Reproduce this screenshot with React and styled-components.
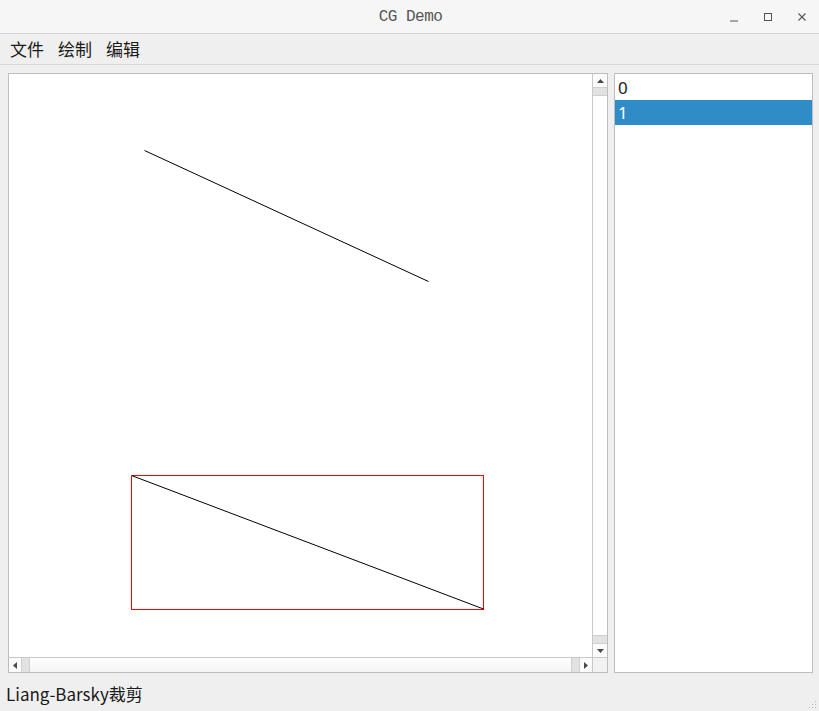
import React from "react";
import styled, { createGlobalStyle } from "styled-components";

const Global = createGlobalStyle`
  html, body { margin: 0; padding: 0; }
  body { width: 819px; height: 711px; overflow: hidden; background: #efefef;
    font-family: "Noto Sans CJK SC", "Noto Sans", sans-serif; }
`;

const Window = styled.div`
  width: 819px; height: 711px; display: flex; flex-direction: column; background: #efefef;
`;

const TitleBar = styled.div`
  height: 33px; flex: none; display: flex; align-items: center; justify-content: center;
  background: #f6f6f6; border-bottom: 1px solid #d4d4d4; position: relative;
`;

const Title = styled.div`
  font-family: "Liberation Mono", "DejaVu Sans Mono", monospace; font-size: 16px; color: #555;
  letter-spacing: -0.5px; padding-left: 2px;
`;

const Controls = styled.div`
  position: absolute; right: 0; top: 0; height: 33px; display: flex; align-items: center;
`;

const Ctrl = styled.div`
  width: 34px; height: 33px; display: flex; align-items: center; justify-content: center;
`;

const MenuBar = styled.div`
  height: 30px; flex: none; display: flex; align-items: center; gap: 14px; padding-left: 10px;
  border-bottom: 1px solid #d8d8d8; background: #efefef;
`;

const MenuItem = styled.span`
  font-size: 17px; color: #1a1a1a; line-height: 30px;
`;

const Main = styled.div`
  flex: none; height: 600px; margin-top: 8px; padding: 0 6px 0 8px; display: flex; gap: 6px;
`;

const ScrollArea = styled.div`
  width: 600px; height: 600px; box-sizing: border-box; border: 1px solid #bdbdbd;
  display: grid; grid-template-columns: 1fr 15px; grid-template-rows: 1fr 15px; background: #fff;
`;

const Viewport = styled.div`
  background: #fff; position: relative; overflow: hidden;
`;

const VBar = styled.div`
  border-left: 1px solid #c8c8c8; display: flex; flex-direction: column; background: #fff;
`;

const HBar = styled.div`
  border-top: 1px solid #c8c8c8; display: flex; background: linear-gradient(#fff, #f4f4f4);
`;

const Corner = styled.div`
  border-top: 1px solid #c8c8c8; border-left: 1px solid #c8c8c8; background: #f2f2f2;
`;

const ArrowBtn = styled.div`
  flex: none; display: flex; align-items: center; justify-content: center;
  width: ${p => (p.$v ? "14px" : "12px")}; height: ${p => (p.$v ? "13px" : "14px")};
  background: #fbfbfb;
`;

const Thumb = styled.div`
  flex: none; background: #e2e2e2;
  ${p => (p.$v ? "height: 7px; border-top: 1px solid #d0d0d0; border-bottom: 1px solid #d0d0d0;" : "width: 7px; border-left: 1px solid #d0d0d0; border-right: 1px solid #d0d0d0;")}
`;

const Track = styled.div`flex: 1;`;

const List = styled.div`
  width: 199px; height: 600px; box-sizing: border-box; border: 1px solid #bdbdbd; background: #fff;
  padding: 1px 0 0 0;
`;

const Row = styled.div`
  height: 25px; line-height: 25px; padding-left: 3px; font-size: 17px;
  font-family: "Noto Sans", "Noto Sans CJK SC", sans-serif;
  background: ${p => (p.$sel ? "#308cc6" : "transparent")};
  color: ${p => (p.$sel ? "#fff" : "#1a1a1a")};
`;

const StatusBar = styled.div`
  flex: 1; display: flex; align-items: flex-end; padding: 0 0 2px 6px; position: relative;
`;

const StatusText = styled.span`
  font-size: 17px; color: #1a1a1a; line-height: 30px;
`;

const Grip = styled.svg`
  position: absolute; right: 2px; bottom: 2px;
`;

const tri = (dir) => {
  const pts = {
    up: "0,4 7,4 3.5,0",
    down: "0,0 7,0 3.5,4",
    left: "4,0 4,7 0,3.5",
    right: "0,0 0,7 4,3.5",
  }[dir];
  const w = dir === "up" || dir === "down" ? 7 : 4;
  const h = dir === "up" || dir === "down" ? 4 : 7;
  return (
    <svg width={w} height={h} viewBox={`0 0 ${w} ${h}`}>
      <polygon points={pts} fill="#4a4a4a" />
    </svg>
  );
};

export default function App() {
  return (
    <>
      <Global />
      <Window>
        <TitleBar>
          <Title>CG Demo</Title>
          <Controls>
            <Ctrl>
              <svg width="10" height="10" viewBox="0 0 10 10"><line x1="1" y1="9" x2="9" y2="9" stroke="#555" strokeWidth="1" /></svg>
            </Ctrl>
            <Ctrl>
              <svg width="10" height="10" viewBox="0 0 10 10"><rect x="1.5" y="1.5" width="7" height="7" fill="none" stroke="#555" strokeWidth="1" /></svg>
            </Ctrl>
            <Ctrl>
              <svg width="10" height="10" viewBox="0 0 10 10"><path d="M1.5 1.5L8.5 8.5M8.5 1.5L1.5 8.5" stroke="#555" strokeWidth="1.1" /></svg>
            </Ctrl>
          </Controls>
        </TitleBar>
        <MenuBar>
          <MenuItem>文件</MenuItem>
          <MenuItem>绘制</MenuItem>
          <MenuItem>编辑</MenuItem>
        </MenuBar>
        <Main>
          <ScrollArea>
            <Viewport>
              <svg width="584" height="584" viewBox="0 0 584 584" style={{ display: "block" }} shapeRendering="crispEdges">
                <line x1="135.5" y1="76.5" x2="419.5" y2="207.5" stroke="#000000" strokeWidth="1" shapeRendering="auto" />
                <line x1="122.5" y1="401.5" x2="474.5" y2="401.5" stroke="#ff0000" strokeWidth="1" />
                <line x1="122.5" y1="535.5" x2="474.5" y2="535.5" stroke="#ff0000" strokeWidth="1" />
                <line x1="122.5" y1="401.5" x2="122.5" y2="535.5" stroke="#ff0000" strokeWidth="1" />
                <line x1="474.5" y1="401.5" x2="474.5" y2="535.5" stroke="#ff0000" strokeWidth="1" />
                <line x1="122.5" y1="401.5" x2="474.5" y2="535" stroke="#000000" strokeWidth="1" shapeRendering="auto" />
              </svg>
            </Viewport>
            <VBar>
              <ArrowBtn $v>{tri("up")}</ArrowBtn>
              <Thumb $v />
              <Track />
              <Thumb $v />
              <ArrowBtn $v>{tri("down")}</ArrowBtn>
            </VBar>
            <HBar>
              <ArrowBtn>{tri("left")}</ArrowBtn>
              <Thumb />
              <Track />
              <Thumb />
              <ArrowBtn>{tri("right")}</ArrowBtn>
            </HBar>
            <Corner />
          </ScrollArea>
          <List>
            <Row>0</Row>
            <Row $sel>1</Row>
          </List>
        </Main>
        <StatusBar>
          <StatusText>Liang-Barsky裁剪</StatusText>
          <Grip width="8" height="8" viewBox="0 0 8 8">
            <rect x="6" y="0" width="1" height="1" fill="#bbb" />
            <rect x="3" y="3" width="1" height="1" fill="#bbb" />
            <rect x="6" y="3" width="1" height="1" fill="#bbb" />
            <rect x="0" y="6" width="1" height="1" fill="#bbb" />
            <rect x="3" y="6" width="1" height="1" fill="#bbb" />
            <rect x="6" y="6" width="1" height="1" fill="#bbb" />
          </Grip>
        </StatusBar>
      </Window>
    </>
  );
}
